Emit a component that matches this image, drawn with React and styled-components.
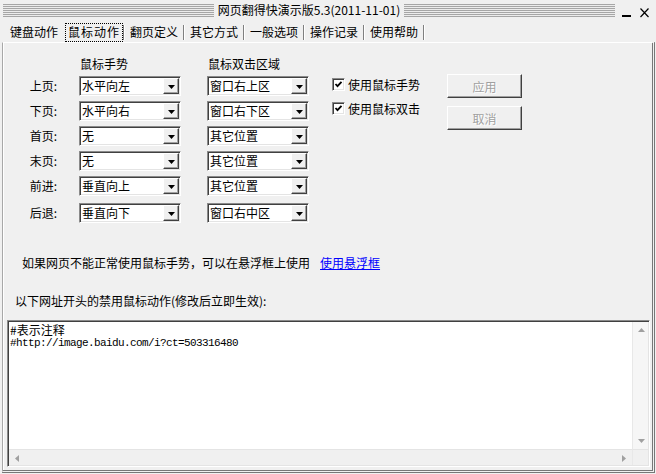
import React from "react";
import styled, { createGlobalStyle } from "styled-components";

const GlobalStyle = createGlobalStyle`
  html, body { margin: 0; padding: 0; background: #f0f0f0; }
  body {
    font-family: "Noto Sans CJK SC", "Liberation Sans", sans-serif;
    font-size: 12px;
    color: #000;
  }
`;

const Window = styled.div`
  width: 656px;
  height: 474px;
  box-sizing: border-box;
  background: #f0f0f0;
  display: flex;
  flex-direction: column;
  overflow: hidden;
`;

const TitleBar = styled.div`
  height: 20px;
  flex-shrink: 0;
  display: flex;
  align-items: center;
  padding-left: 3px;
`;

const Stripes = styled.div`
  flex: 1;
  height: 13px;
  margin-top: 1px;
  background: repeating-linear-gradient(
    to bottom,
    #a6a6a6 0 1px,
    #ececec 1px 2px
  );
`;

const TitleText = styled.div`
  padding: 0 4px;
  line-height: 14px;
  white-space: nowrap;
`;

const Controls = styled.div`
  display: flex;
  align-items: center;
  gap: 9px;
  padding: 0 7px;
  height: 20px;
`;

const TabStrip = styled.div`
  height: 22px;
  flex-shrink: 0;
  display: flex;
  align-items: center;
  padding-left: 5px;
`;

const Tab = styled.div`
  width: 58px;
  height: 22px;
  display: flex;
  align-items: center;
  justify-content: center;
  white-space: nowrap;
  line-height: 14px;
`;

const TabLabel = styled.span`
  padding: 1px 2px 2px;
  border: 1px ${(p) => (p.$active ? "dotted #000" : "solid transparent")};
  letter-spacing: ${(p) => (p.$active ? "1px" : "0")};
  margin-top: 2px;
`;

const TabSep = styled.div`
  height: 15px;
  margin-top: 3px;
  border-left: 1px solid ${(p) => (p.$hidden ? "transparent" : "#808080")};
  border-right: 1px solid ${(p) => (p.$hidden ? "transparent" : "#ffffff")};
  width: 0;
`;

const TabPage = styled.div`
  flex: 1;
  margin: 0 1px 1px 2px;
  border-top: 1px solid #ffffff;
  border-left: 1px solid #a8a8a8;
  border-right: 3px double #777777;
  border-bottom: 3px double #777777;
  box-shadow: inset 1px 0 0 #ffffff;
  display: flex;
  flex-direction: column;
  min-height: 0;
`;

const FormArea = styled.div`
  display: flex;
  padding: 14px 0 0 14px;
`;

const FormGrid = styled.div`
  display: flex;
  flex-direction: column;
  gap: 5px;
`;

const FormRow = styled.div`
  display: grid;
  grid-template-columns: 62px 128px 102px;
  align-items: center;
  margin-top: ${(p) => (p.$extra ? "2px" : "0")};
`;

const HeaderRow = styled(FormRow)`
  height: 14px;
  line-height: 14px;
`;

const HeaderCell = styled.div`
  padding-left: 1px;
  white-space: nowrap;
`;

const RowLabel = styled.div`
  text-align: right;
  padding-right: 22px;
  line-height: 20px;
  white-space: nowrap;
`;

const Combo = styled.div`
  width: 102px;
  height: 20px;
  box-sizing: border-box;
  display: flex;
  align-items: stretch;
  padding: 1px;
  background: #ffffff;
  border: 1px solid;
  border-color: #8a8a8a #ffffff #ffffff #8a8a8a;
  box-shadow: inset 1px 1px 0 #404040, inset -1px -1px 0 #e4e4e4;
`;

const ComboText = styled.div`
  flex: 1;
  padding-left: 1px;
  line-height: 16px;
  white-space: nowrap;
`;

const ComboButton = styled.div`
  width: 16px;
  box-sizing: border-box;
  background: #f0f0f0;
  border: 1px solid;
  border-color: #ffffff #404040 #404040 #ffffff;
  box-shadow: inset -1px -1px 0 #a0a0a0;
  display: flex;
  align-items: center;
  justify-content: center;
  padding-top: 1px;
`;

const CheckColumn = styled.div`
  width: 115px;
  margin-left: 23px;
  padding-top: 20px;
  display: flex;
  flex-direction: column;
  gap: 9px;
`;

const CheckRow = styled.label`
  height: 15px;
  display: flex;
  align-items: center;
  gap: 3px;
  line-height: 15px;
  white-space: nowrap;
`;

const CheckBox = styled.span`
  width: 13px;
  height: 13px;
  box-sizing: border-box;
  background: #ffffff;
  border: 1px solid;
  border-color: #8a8a8a #ffffff #ffffff #8a8a8a;
  box-shadow: inset 1px 1px 0 #404040, inset -1px -1px 0 #e4e4e4;
  display: flex;
  align-items: center;
  justify-content: center;
  flex-shrink: 0;
`;

const ButtonColumn = styled.div`
  padding-top: 17px;
  display: flex;
  flex-direction: column;
  gap: 8px;
`;

const PushButton = styled.button`
  width: 75px;
  height: 24px;
  box-sizing: border-box;
  padding: 0;
  margin: 0;
  font-family: inherit;
  font-size: 12px;
  background: #f0f0f0;
  border: 1px solid;
  border-color: #ffffff #404040 #404040 #ffffff;
  box-shadow: inset -1px -1px 0 #a0a0a0;
  color: #a0a0a0;
  text-shadow: 1px 1px 0 #ffffff;
`;

const InfoRow = styled.div`
  margin-top: 33px;
  padding-left: 19px;
  line-height: 14px;
  display: flex;
  white-space: nowrap;
`;

const Link = styled.a`
  margin-left: 10px;
  color: #0000ff;
  text-decoration: underline;
  cursor: pointer;
`;

const Hint = styled.div`
  margin-top: 24px;
  padding-left: 12px;
  line-height: 14px;
  white-space: nowrap;
`;

const TextBox = styled.div`
  flex: 1;
  margin: 12px 2px 3px 4px;
  box-sizing: border-box;
  background: #ffffff;
  border: 1px solid;
  border-color: #8a8a8a #ffffff #ffffff #8a8a8a;
  box-shadow: inset 1px 1px 0 #404040, inset -1px -1px 0 #e4e4e4;
  padding: 1px;
  display: grid;
  grid-template-columns: 1fr 16px;
  grid-template-rows: 1fr 16px;
  min-height: 0;
`;

const TextContent = styled.div`
  padding: 1px 0 0 1px;
  min-width: 0;
`;

const TextLine = styled.div`
  white-space: pre;
  line-height: ${(p) => (p.$mono ? "12px" : "14px")};
  font-family: ${(p) =>
    p.$mono
      ? '"Liberation Mono", "DejaVu Sans Mono", monospace'
      : '"Noto Sans CJK SC", sans-serif'};
  font-size: ${(p) => (p.$mono ? "11px" : "12px")};
  letter-spacing: ${(p) => (p.$mono ? "-0.6px" : "0")};
`;

const VScroll = styled.div`
  background: #f6f6f6;
  border-left: 1px solid #e8e8e8;
  display: flex;
  flex-direction: column;
  justify-content: space-between;
`;

const HScroll = styled.div`
  background: #f0f0f0;
  border-top: 1px solid #e4e4e4;
  display: flex;
  justify-content: space-between;
`;

const Corner = styled.div`
  background: #f0f0f0;
  border-top: 1px solid #e4e4e4;
  border-left: 1px solid #e8e8e8;
`;

const ArrowCell = styled.div`
  width: 16px;
  height: 16px;
  display: flex;
  align-items: center;
  justify-content: center;
`;

const Arrow = ({ dir, color = "#000" }) => {
  const pts = {
    down: "0,0 7,0 3.5,4",
    up: "0,4 7,4 3.5,0",
    left: "4,0 4,7 0,3.5",
    right: "0,0 0,7 4,3.5",
  }[dir];
  const vertical = dir === "up" || dir === "down";
  return (
    <svg
      width={vertical ? 7 : 4}
      height={vertical ? 4 : 7}
      viewBox={vertical ? "0 0 7 4" : "0 0 4 7"}
    >
      <polygon points={pts} fill={color} />
    </svg>
  );
};

const ComboBox = ({ value }) => (
  <Combo>
    <ComboText>{value}</ComboText>
    <ComboButton>
      <Arrow dir="down" />
    </ComboButton>
  </Combo>
);

const Check = ({ label }) => (
  <CheckRow>
    <CheckBox>
      <svg width="9" height="9" viewBox="0 0 9 9">
        <polyline
          points="1.5,4 3.5,6.2 7.5,1.8"
          fill="none"
          stroke="#000"
          strokeWidth="1.8"
        />
      </svg>
    </CheckBox>
    {label}
  </CheckRow>
);

const tabs = ["键盘动作", "鼠标动作", "翻页定义", "其它方式", "一般选项", "操作记录", "使用帮助"];

const rows = [
  ["上页:", "水平向左", "窗口右上区"],
  ["下页:", "水平向右", "窗口右下区"],
  ["首页:", "无", "其它位置"],
  ["末页:", "无", "其它位置"],
  ["前进:", "垂直向上", "其它位置"],
  ["后退:", "垂直向下", "窗口右中区"],
];

export default function App() {
  return (
    <>
      <GlobalStyle />
      <Window>
        <TitleBar>
          <Stripes />
          <TitleText>网页翻得快演示版5.3(2011-11-01)</TitleText>
          <Stripes />
          <Controls>
            <svg width="9" height="20" viewBox="0 0 9 20">
              <rect x="0" y="15" width="9" height="2" fill="#000" />
            </svg>
            <svg width="9" height="20" viewBox="0 0 9 20">
              <path d="M0.5 8.5 L8.5 17 M8.5 8.5 L0.5 17" stroke="#000" strokeWidth="1.2" fill="none" />
            </svg>
          </Controls>
        </TitleBar>
        <TabStrip>
          {tabs.map((t, i) => (
            <React.Fragment key={t}>
              <Tab>
                <TabLabel $active={i === 1}>{t}</TabLabel>
              </Tab>
              <TabSep $hidden={i === 0} />
            </React.Fragment>
          ))}
        </TabStrip>
        <TabPage>
          <FormArea>
            <FormGrid>
              <HeaderRow>
                <span />
                <HeaderCell>鼠标手势</HeaderCell>
                <HeaderCell>鼠标双击区域</HeaderCell>
              </HeaderRow>
              {rows.map(([label, g, z], i) => (
                <FormRow key={label} $extra={i === rows.length - 1}>
                  <RowLabel>{label}</RowLabel>
                  <ComboBox value={g} />
                  <ComboBox value={z} />
                </FormRow>
              ))}
            </FormGrid>
            <CheckColumn>
              <Check label="使用鼠标手势" />
              <Check label="使用鼠标双击" />
            </CheckColumn>
            <ButtonColumn>
              <PushButton disabled>应用</PushButton>
              <PushButton disabled>取消</PushButton>
            </ButtonColumn>
          </FormArea>
          <InfoRow>
            如果网页不能正常使用鼠标手势，可以在悬浮框上使用
            <Link>使用悬浮框</Link>
          </InfoRow>
          <Hint>以下网址开头的禁用鼠标动作(修改后立即生效):</Hint>
          <TextBox>
            <TextContent>
              <TextLine>#表示注释</TextLine>
              <TextLine $mono>#http://image.baidu.com/i?ct=503316480</TextLine>
            </TextContent>
            <VScroll>
              <ArrowCell>
                <Arrow dir="up" color="#a0a0a0" />
              </ArrowCell>
              <ArrowCell>
                <Arrow dir="down" color="#a0a0a0" />
              </ArrowCell>
            </VScroll>
            <HScroll>
              <ArrowCell>
                <Arrow dir="left" color="#a0a0a0" />
              </ArrowCell>
              <ArrowCell>
                <Arrow dir="right" color="#a0a0a0" />
              </ArrowCell>
            </HScroll>
            <Corner />
          </TextBox>
        </TabPage>
      </Window>
    </>
  );
}
